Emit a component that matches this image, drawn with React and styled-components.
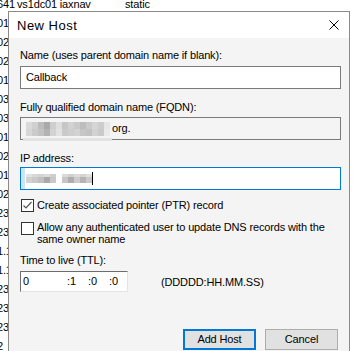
import styled, { createGlobalStyle } from "styled-components";

const GlobalStyle = createGlobalStyle`
  html, body {
    margin: 0;
    padding: 0;
    background: #ffffff;
  }
  body {
    font-family: "Liberation Sans", Arial, sans-serif;
  }
`;

const fqdnRows = [
  ["#dadada", "#d0d0d0", "#bcbcbc", "#a9a9a9", "#cecece", "#dedede", "#c6c6c6", "#d2d2d2", "#c9c9c9", "#bdbdbd", "#cacaca", "#d6d6d6", "#cdcdcd", "#e6e6e6"],
  ["#d6d6d6", "#cacaca", "#c2c2c2", "#b3b3b3", "#d2d2d2", "#e2e2e2", "#cacaca", "#cecece", "#d2d2d2", "#c6c6c6", "#c2c2c2", "#d2d2d2", "#cacaca", "#eaeaea"],
];

const ipRows = [
  ["#e2e2e2", "#d8d8d8", "#d4d4d4", "#dcdcdc", "#cfcfcf", "#ffffff", "#dadada", "#d0d0d0", "#dcdcdc", "#d4d4d4", "#e0e0e0"],
  ["#d2d2d2", "#c9c9c9", "#c0c0c0", "#a9a9a9", "#c8c8c8", "#ffffff", "#c6c6c6", "#adadad", "#cccccc", "#b4b4b4", "#cacaca"],
];

const bgRows = ["01", "02", "02", "01", "03", "03", "01", "02", "01", "02", "23", "23", "1.1", "1.1", "23", "23", "23", "2"];

const App = () => {
  return (
    <Page>
      <GlobalStyle />
      <BgList>
        <BgRow>
          <BgCell>641</BgCell>
          <BgName>vs1dc01 iaxnav</BgName>
          <BgType>static</BgType>
        </BgRow>
        {bgRows.map((t, i) => (
          <BgRow key={i}>
            <BgStub>{t}</BgStub>
          </BgRow>
        ))}
      </BgList>

      <Dialog>
        <TitleBar>
          <Title>New Host</Title>
          <CloseIcon viewBox="0 0 10 10">
            <path d="M0.5 0.5 L9.5 9.5 M9.5 0.5 L0.5 9.5" stroke="#000" strokeWidth="1" fill="none" />
          </CloseIcon>
        </TitleBar>

        <Body>
          <Label>Name (uses parent domain name if blank):</Label>
          <Field $mt={3}>Callback</Field>

          <Label $mt={11}>Fully qualified domain name (FQDN):</Label>
          <Field $mt={2} $readOnly>
            <Mosaic>
              {fqdnRows.map((row, r) => (
                <MosaicRow key={r}>
                  {row.map((c, i) => (
                    <Pixel key={i} $shade={c} $w={6} $h={7} />
                  ))}
                </MosaicRow>
              ))}
            </Mosaic>
            <span>org.</span>
            <BlurStrip />
          </Field>

          <Label $mt={11}>IP address:</Label>
          <Field $mt={1} $focused>
            <Selection />
            <Mosaic>
              {ipRows.map((row, r) => (
                <MosaicRow key={r}>
                  {row.map((c, i) => (
                    <Pixel key={i} $shade={c} $w={6} $h={r === 0 ? 3 : 6} />
                  ))}
                </MosaicRow>
              ))}
            </Mosaic>
            <Caret />
          </Field>

          <CheckRow $mt={8}>
            <CheckBox>
              <svg width="11" height="11" viewBox="0 0 11 11">
                <polyline points="1.5,5.5 4,8 9.5,2" stroke="#555" strokeWidth="1.2" fill="none" />
              </svg>
            </CheckBox>
            <CheckText>Create associated pointer (PTR) record</CheckText>
          </CheckRow>

          <CheckRow $mt={8}>
            <CheckBox />
            <CheckText $wrap>
              Allow any authenticated user to update DNS records with the same owner name
            </CheckText>
          </CheckRow>

          <Label $mt={8}>Time to live (TTL):</Label>
          <TtlRow>
            <TtlBox>
              <TtlPart $w={44}>0</TtlPart>
              <TtlPart $w={21}>:1</TtlPart>
              <TtlPart $w={21}>:0</TtlPart>
              <TtlPart>:0</TtlPart>
            </TtlBox>
            <TtlHint>(DDDDD:HH.MM.SS)</TtlHint>
          </TtlRow>

          <ButtonRow>
            <Button $primary>Add Host</Button>
            <Button>Cancel</Button>
          </ButtonRow>
        </Body>
      </Dialog>
    </Page>
  );
};

export default App;

const Page = styled.div`
  position: relative;
  width: 356px;
  height: 351px;
  overflow: hidden;
  background: #ffffff;
  font-size: 11px;
  letter-spacing: -0.15px;
  color: #000;
`;

const BgList = styled.div`
  display: flex;
  flex-direction: column;
  margin-top: -5px;
`;

const BgRow = styled.div`
  display: flex;
  height: 19px;
  line-height: 19px;
  white-space: nowrap;
`;

const BgCell = styled.div`
  width: 18px;
  margin-left: -3px;
`;

const BgStub = styled.div`
  width: 11px;
  margin-left: -3px;
  overflow: hidden;
`;

const BgName = styled.div`
  margin-left: 2px;
  width: 108px;
`;

const BgType = styled.div``;

const Dialog = styled.div`
  position: absolute;
  left: 8px;
  top: 11px;
  width: 342px;
  height: 360px;
  box-sizing: border-box;
  border: 1px solid #8a8a8a;
  background: #f4f4f4;
  display: flex;
  flex-direction: column;
`;

const TitleBar = styled.div`
  height: 26px;
  background: #ffffff;
  display: flex;
  align-items: center;
  justify-content: space-between;
  padding: 0 10px 0 8px;
`;

const Title = styled.div`
  font-size: 13px;
  letter-spacing: 0.5px;
  line-height: 15px;
`;

const CloseIcon = styled.svg`
  width: 10px;
  height: 10px;
`;

const Body = styled.div`
  display: flex;
  flex-direction: column;
  padding: 10px 8px 0 11px;
`;

const Label = styled.div`
  line-height: 15px;
  margin-top: ${(p) => p.$mt || 0}px;
`;

const Field = styled.div`
  position: relative;
  height: 23px;
  box-sizing: border-box;
  margin-top: ${(p) => p.$mt || 0}px;
  border: 1px solid ${(p) => (p.$focused ? "#0078d7" : "#7a7a7a")};
  background: ${(p) => (p.$readOnly ? "#f4f4f4" : "#ffffff")};
  display: flex;
  align-items: center;
  padding-left: 5px;
  line-height: 15px;
`;

const Mosaic = styled.div`
  display: flex;
  flex-direction: column;
  margin-right: 2px;
`;

const MosaicRow = styled.div`
  display: flex;
`;

const Pixel = styled.div`
  width: ${(p) => p.$w}px;
  height: ${(p) => p.$h}px;
  background: ${(p) => p.$shade};
`;

const BlurStrip = styled.div`
  position: absolute;
  left: 2px;
  bottom: -2px;
  width: 89px;
  height: 3px;
  background: #e2e2e2;
`;

const Selection = styled.div`
  position: absolute;
  left: 0;
  top: 0;
  bottom: 0;
  width: 4px;
  background: #cce4f7;
`;

const Caret = styled.div`
  width: 1px;
  height: 13px;
  background: #000;
  margin-left: -2px;
`;

const CheckRow = styled.div`
  display: flex;
  align-items: flex-start;
  margin-top: ${(p) => p.$mt || 0}px;
  margin-left: 1px;
`;

const CheckBox = styled.div`
  width: 13px;
  height: 13px;
  box-sizing: border-box;
  border: 1px solid #333333;
  background: #ffffff;
  flex-shrink: 0;
  display: flex;
  align-items: center;
  justify-content: center;
  margin-top: 1px;
`;

const CheckText = styled.div`
  margin-left: 3px;
  line-height: ${(p) => (p.$wrap ? "12px" : "15px")};
  padding-right: 10px;
`;

const TtlRow = styled.div`
  display: flex;
  align-items: center;
  margin-top: 3px;
`;

const TtlBox = styled.div`
  width: 108px;
  height: 21px;
  box-sizing: border-box;
  border: 1px solid;
  border-color: #6d6d6d #e3e3e3 #e3e3e3 #6d6d6d;
  background: #ffffff;
  display: flex;
  align-items: center;
  padding-left: 2px;
  line-height: 15px;
`;

const TtlPart = styled.div`
  width: ${(p) => (p.$w ? `${p.$w}px` : "auto")};
`;

const TtlHint = styled.div`
  margin-left: 33px;
`;

const ButtonRow = styled.div`
  display: flex;
  justify-content: flex-end;
  gap: 9px;
  margin-top: 37px;
  padding-right: 3px;
`;

const Button = styled.div`
  width: 73px;
  height: 21px;
  box-sizing: border-box;
  border: ${(p) => (p.$primary ? "2px solid #0078d7" : "1px solid #adadad")};
  background: #e1e1e1;
  display: flex;
  align-items: center;
  justify-content: center;
  line-height: 15px;
`;
